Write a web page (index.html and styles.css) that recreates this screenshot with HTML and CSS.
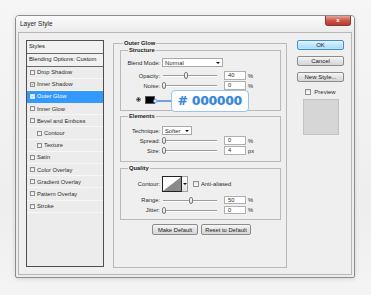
FILE: index.html
```html
<!DOCTYPE html>
<html>
<head>
<meta charset="utf-8">
<title>Layer Style</title>
<link rel="stylesheet" href="styles.css">
</head>
<body>
<div class="dialog">
  <div class="titlebar">
    <span class="title">Layer Style</span>
    <span class="close">x</span>
  </div>
  <div class="frame">
    <div class="list">
      <div class="list-head first">Styles</div>
      <div class="list-head">Blending Options: Custom</div>
      <div class="item"><span class="cb"></span>Drop Shadow</div>
      <div class="item"><span class="cb"><svg viewBox="0 0 6 6"><path d="M1 3.2 L2.4 4.6 L5 1.3" fill="none" stroke="#333" stroke-width="0.9"/></svg></span>Inner Shadow</div>
      <div class="item selected"><span class="cb"><svg viewBox="0 0 6 6"><path d="M1 3.2 L2.4 4.6 L5 1.3" fill="none" stroke="#1b4f8a" stroke-width="0.9"/></svg></span>Outer Glow</div>
      <div class="item"><span class="cb"></span>Inner Glow</div>
      <div class="item"><span class="cb"></span>Bevel and Emboss</div>
      <div class="item sub"><span class="cb"></span>Contour</div>
      <div class="item sub"><span class="cb"></span>Texture</div>
      <div class="item"><span class="cb"></span>Satin</div>
      <div class="item"><span class="cb"></span>Color Overlay</div>
      <div class="item"><span class="cb"></span>Gradient Overlay</div>
      <div class="item"><span class="cb"></span>Pattern Overlay</div>
      <div class="item"><span class="cb"></span>Stroke</div>
    </div>

    <fieldset class="group outer">
      <legend>Outer Glow</legend>

      <fieldset class="group inner structure">
        <legend>Structure</legend>
        <div class="row blend">
          <span class="lbl">Blend Mode:</span>
          <span class="select mode">Normal<span class="arrow"></span></span>
        </div>
        <div class="row">
          <span class="lbl">Opacity:</span>
          <span class="slider"><span class="thumb" style="left:40%"></span></span>
          <span class="num">40</span><span class="unit">%</span>
        </div>
        <div class="row">
          <span class="lbl">Noise:</span>
          <span class="slider"><span class="thumb" style="left:0%"></span></span>
          <span class="num">0</span><span class="unit">%</span>
        </div>
        <div class="row color">
          <span class="radio"></span>
          <span class="swatch"></span>
          <span class="gradient"></span>
          <span class="callout">
            <svg class="connector" viewBox="0 0 22 6"><circle cx="2.5" cy="3" r="2" fill="#d8e8fa" stroke="#3b86d8" stroke-width="0.8"/><path d="M4.5 3 H22" stroke="#3b86d8" stroke-width="1.6"/></svg>
            <span class="bubble"># 000000</span>
          </span>
        </div>
      </fieldset>

      <fieldset class="group inner elements">
        <legend>Elements</legend>
        <div class="row">
          <span class="lbl">Technique:</span>
          <span class="select tech">Softer<span class="arrow"></span></span>
        </div>
        <div class="row">
          <span class="lbl">Spread:</span>
          <span class="slider"><span class="thumb" style="left:0%"></span></span>
          <span class="num">0</span><span class="unit">%</span>
        </div>
        <div class="row">
          <span class="lbl">Size:</span>
          <span class="slider"><span class="thumb" style="left:0%"></span></span>
          <span class="num">4</span><span class="unit">px</span>
        </div>
      </fieldset>

      <fieldset class="group inner quality">
        <legend>Quality</legend>
        <div class="row contour-row">
          <span class="lbl">Contour:</span>
          <span class="contour">
            <svg viewBox="0 0 20 16"><rect x="0.5" y="0.5" width="19" height="15" fill="#fff" stroke="#222"/><path d="M1 15 L19 1 L19 15 Z" fill="#8a8a8a"/></svg>
            <span class="contour-drop"><span class="arrow"></span></span>
          </span>
          <span class="cb aa"></span><span class="aa-text">Anti-aliased</span>
        </div>
        <div class="row">
          <span class="lbl">Range:</span>
          <span class="slider"><span class="thumb" style="left:50%"></span></span>
          <span class="num">50</span><span class="unit">%</span>
        </div>
        <div class="row">
          <span class="lbl">Jitter:</span>
          <span class="slider"><span class="thumb" style="left:0%"></span></span>
          <span class="num">0</span><span class="unit">%</span>
        </div>
      </fieldset>

      <div class="defaults">
        <span class="btn">Make Default</span>
        <span class="btn">Reset to Default</span>
      </div>
    </fieldset>

    <div class="side">
      <span class="btn big ok">OK</span>
      <span class="btn big">Cancel</span>
      <span class="btn big">New Style...</span>
      <div class="preview"><span class="cb"></span>Preview</div>
      <div class="preview-box"></div>
    </div>
  </div>
</div>
</body>
</html>
```

FILE: styles.css
```css
* { box-sizing: border-box; }
html, body { margin: 0; }
body {
  width: 371px;
  height: 295px;
  overflow: hidden;
  padding: 15px 0 0 15px;
  background: linear-gradient(#f6f6f6, #eeeeee 70%, #f4f4f4);
  font-family: "Liberation Sans", Arial, sans-serif;
  font-size: 5.8px;
  color: #2a2a2a;
  white-space: nowrap;
}

.dialog {
  width: 340px;
  height: 263px;
  border: 1px solid #8d8d8d;
  border-radius: 4px 4px 2px 2px;
  background: #ededed;
  display: flex;
  flex-direction: column;
  box-shadow: 0 1px 5px rgba(0,0,0,0.12);
}

.titlebar {
  height: 16px;
  flex: none;
  display: flex;
  align-items: flex-start;
  padding-left: 4px;
  background: linear-gradient(#fbfbfb, #ebebeb);
  border-radius: 3px 3px 0 0;
}
.title { font-size: 6.5px; line-height: 16px; color: #1e1e1e; }
.close {
  margin-left: auto;
  margin-right: 3px;
  width: 26px;
  height: 10px;
  border: 1px solid #8a3a33;
  border-top: none;
  border-radius: 0 0 3px 3px;
  background: linear-gradient(#e8a49a, #c9574a 50%, #b9392c);
  color: #fff;
  font-weight: bold;
  font-size: 6px;
  line-height: 9px;
  text-align: center;
}

.frame {
  flex: 1;
  margin: 0 2px 2px;
  border: 1px solid #b7b7b7;
  background: #efefef;
  display: flex;
  align-items: flex-start;
  padding: 7px 7px 0 7px;
}

/* style list */
.list {
  width: 78px;
  height: 227px;
  border: 1px solid #4f4f4f;
  background: #ececec;
  flex: none;
}
.list-head {
  height: 13px;
  line-height: 11.5px;
  padding-left: 2px;
  background: #f1f1f1;
  border-bottom: 1.5px solid #6a6a6a;
  color: #222;
}
.list-head.first { height: 12.5px; }
.item {
  height: 12.2px;
  display: flex;
  align-items: center;
  padding-left: 3px;
  border-bottom: 1px solid #f7f7f7;
  color: #2c2c2c;
}
.item.sub { padding-left: 10px; }
.item.selected { background: #3399ff; color: #fff; border-bottom-color: #3399ff; }
.cb {
  width: 5px;
  height: 5px;
  border: 0.7px solid #8e8e8e;
  background: linear-gradient(#e4e4e4, #fdfdfd);
  margin-right: 2px;
  flex: none;
  display: inline-flex;
}
.cb svg { width: 100%; height: 100%; display: block; }
.selected .cb { background: #fff; border-color: #d0e6ff; }

/* group boxes */
.group {
  margin: 0;
  border: 1px solid #b9b9b9;
  min-width: 0;
}
.group legend {
  font-weight: bold;
  line-height: 7px;
  padding: 0 1px;
  color: #1e1e1e;
}
.outer {
  width: 174px;
  height: 228px;
  margin-left: 9px;
  padding: 0 5px 0 6px;
  flex: none;
}
.outer > legend { margin-left: 3px; }
.inner { padding: 0; }
.inner > legend { margin-left: 7px; }
.structure { padding: 3px 0 4px; }
.elements { margin-top: 2px; padding: 6px 0 5px; }
.quality { margin-top: 3px; padding: 4.5px 0 4px; }

.row {
  height: 10px;
  display: flex;
  align-items: center;
}
.lbl {
  width: 39px;
  text-align: right;
  margin-right: 2px;
  flex: none;
}
.blend { height: 11px; margin-bottom: 2.5px; }

.select {
  height: 9px;
  background: #fff;
  border: 1px solid #a9a9a9;
  display: flex;
  align-items: center;
  padding-left: 2px;
  position: relative;
}
.select.mode { width: 61px; }
.select.tech { width: 30px; }
.arrow {
  margin-left: auto;
  margin-right: 2px;
  width: 0;
  height: 0;
  border-left: 2px solid transparent;
  border-right: 2px solid transparent;
  border-top: 2.5px solid #111;
}

.slider {
  width: 54px;
  height: 1px;
  margin-left: 1px;
  background: #9c9c9c;
  box-shadow: 0 1px 0 #fff;
  position: relative;
  flex: none;
}
.thumb {
  position: absolute;
  top: -3px;
  width: 4px;
  height: 7px;
  margin-left: -1px;
  border: 0.8px solid #7d7d7d;
  border-radius: 2px;
  background: linear-gradient(#ffffff, #dcdcdc);
}
.num {
  width: 22px;
  height: 8.5px;
  margin-left: 7px;
  background: #fff;
  border: 1px solid #b0b0b0;
  line-height: 6.5px;
  padding-left: 3px;
  flex: none;
}
.unit { margin-left: 2px; }

.color { height: 12px; margin-top: 3px; padding-left: 15px; position: relative; }
.radio {
  width: 5px;
  height: 5px;
  border-radius: 50%;
  border: 0.8px solid #777;
  background: radial-gradient(circle, #333 0 1.1px, #e6e6e6 1.4px);
  flex: none;
}
.swatch {
  width: 10px;
  height: 8px;
  margin-left: 4px;
  background: #000;
  border: 0.7px solid #555;
  flex: none;
}
.gradient {
  width: 74px;
  height: 10px;
  margin-left: 17px;
  border-left: 1px solid #333;
  background: #fff;
  flex: none;
}
.callout {
  position: absolute;
  left: 32px;
  top: -4px;
  display: flex;
  align-items: center;
}
.connector { width: 20px; height: 6px; display: block; margin-right: -2px; }
.bubble {
  width: 78px;
  height: 22px;
  border: 1px solid #9cc3ee;
  border-radius: 4px;
  background: #fff;
  color: #3b86d8;
  font-family: "DejaVu Sans", "Liberation Sans", sans-serif;
  font-weight: bold;
  font-size: 12px;
  line-height: 20px;
  text-align: center;
  text-shadow: 0 0 1px #9fc7f1;
}

.contour-row { height: 16px; }
.contour { display: flex; height: 16px; flex: none; }
.contour svg { width: 20px; height: 16px; display: block; }
.contour-drop {
  width: 6px;
  height: 16px;
  border: 1px solid #a0a0a0;
  border-left: none;
  background: linear-gradient(#fdfdfd, #e2e2e2);
  display: flex;
  align-items: center;
  justify-content: center;
}
.contour-drop .arrow { margin: 0; }
.cb.aa { margin-left: 5px; width: 6px; height: 6px; }
.quality .contour-row + .row { margin-top: 3px; }

.defaults {
  display: flex;
  justify-content: center;
  gap: 3px;
  margin-top: 4px;
  padding-left: 2px;
}
.btn {
  height: 11px;
  padding: 0 2px;
  border: 1px solid #8c8c8c;
  border-radius: 2px;
  background: linear-gradient(#f7f7f7, #e3e3e3 50%, #d6d6d6);
  display: flex;
  align-items: center;
  justify-content: center;
  color: #222;
}
.defaults .btn:first-child { width: 46px; }
.defaults .btn:last-child { width: 50px; }

.side {
  width: 47px;
  margin-left: 10px;
  display: flex;
  flex-direction: column;
  align-items: stretch;
  flex: none;
}
.btn.big { height: 10px; margin-bottom: 6px; font-size: 6px; }
.btn.ok {
  border-color: #3d8fd1;
  background: linear-gradient(#eaf6fd, #bee6fd 50%, #a7d9f5);
  box-shadow: inset 0 0 0 0.5px #d4f0ff;
}
.preview {
  display: flex;
  align-items: center;
  justify-content: center;
  height: 7px;
  font-size: 6px;
}
.preview .cb { width: 6px; height: 6px; margin-right: 3px; }
.preview-box {
  width: 36px;
  height: 36px;
  margin: 4px auto 0;
  background: #d6d6d6;
  border: 1px solid #c3c3c3;
}
```
